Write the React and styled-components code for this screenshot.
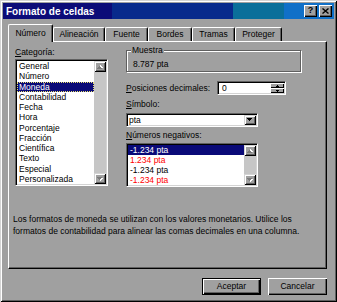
import styled, { createGlobalStyle } from "styled-components";

const COLORS = {
  face: "#a0a0a0",
  light: "#d4d4d4",
  white: "#ffffff",
  shadow: "#606060",
  dark: "#000000",
  navy: "#0a0a78",
  red: "#ff0000",
  track: "#c6c6c6",
  arrowOff: "#7a7a7a",
};

const GlobalStyle = createGlobalStyle`
  html, body {
    margin: 0;
    padding: 0;
    background: ${COLORS.face};
  }
  body {
    font-family: "Liberation Sans", Arial, sans-serif;
    font-size: 8.5px;
    color: #000;
  }
`;

const Window = styled.div`
  width: 337px;
  height: 302px;
  box-sizing: border-box;
  padding: 3px;
  background: ${COLORS.face};
  box-shadow: inset 1px 1px ${COLORS.light}, inset -1px -1px ${COLORS.dark},
    inset 2px 2px ${COLORS.white}, inset -2px -2px ${COLORS.shadow};
  display: flex;
  flex-direction: column;
`;

const TitleBar = styled.div`
  height: 16px;
  display: flex;
  align-items: center;
  justify-content: space-between;
  padding: 0 2px 0 3px;
  background: linear-gradient(
    to right,
    #0c0c78 0%,
    #0c0c78 33%,
    #082a8c 33%,
    #082a8c 69.5%,
    #0a6f9a 69.5%,
    #0a6f9a 85%,
    #1070c8 85%,
    #1070c8 100%
  );
`;

const Title = styled.span`
  color: #fff;
  font-weight: bold;
  font-size: 10px;
`;

const CaptionButtons = styled.div`
  display: flex;
  gap: 2px;
`;

const CaptionButton = styled.div`
  width: 13px;
  height: 12px;
  box-sizing: border-box;
  background: ${COLORS.face};
  box-shadow: inset 1px 1px ${COLORS.white}, inset -1px -1px ${COLORS.dark},
    inset -2px -2px ${COLORS.shadow};
  display: flex;
  align-items: center;
  justify-content: center;
  font-weight: bold;
  font-size: 9px;
  line-height: 1;
  padding-bottom: 1px;
`;

const Body = styled.div`
  display: flex;
  flex-direction: column;
  padding: 5px 7px 0 5px;
`;

const TabRow = styled.div`
  display: flex;
  align-items: flex-end;
  height: 17px;
`;

const Tab = styled.div`
  position: relative;
  z-index: ${(p) => (p.$active ? 1 : 0)};
  width: ${(p) => p.$w}px;
  height: ${(p) => (p.$active ? 18 : 14)}px;
  margin-bottom: ${(p) => (p.$active ? -1 : 0)}px;
  box-sizing: border-box;
  background: ${COLORS.face};
  border-top: 1px solid ${COLORS.white};
  border-left: 1px solid ${COLORS.white};
  border-right: 1px solid ${COLORS.dark};
  border-radius: 2px 2px 0 0;
  box-shadow: inset -1px 0 ${COLORS.shadow};
  display: flex;
  justify-content: center;
  padding-top: ${(p) => (p.$active ? 3 : 1)}px;
  line-height: 11px;
  white-space: nowrap;
`;

const Panel = styled.div`
  height: 228px;
  box-sizing: border-box;
  border: 1px solid;
  border-color: ${COLORS.white} ${COLORS.dark} ${COLORS.dark} ${COLORS.white};
  box-shadow: inset -1px -1px ${COLORS.shadow};
  padding: 5px 0 0 6px;
  display: flex;
  flex-direction: column;
`;

const Columns = styled.div`
  display: flex;
  gap: 18px;
`;

const Column = styled.div`
  display: flex;
  flex-direction: column;
  width: ${(p) => p.$w}px;
`;

const Label = styled.div`
  line-height: 11px;
  height: 11px;
  margin-top: ${(p) => p.$mt || 0}px;
  white-space: nowrap;
  u {
    text-decoration: underline;
    text-underline-offset: 1px;
  }
`;

const Sunken = styled.div`
  box-sizing: border-box;
  width: ${(p) => p.$w}px;
  height: ${(p) => p.$h}px;
  margin-top: ${(p) => p.$mt || 0}px;
  background: ${COLORS.white};
  border: 1px solid;
  border-color: ${COLORS.shadow} ${COLORS.white} ${COLORS.white} ${COLORS.shadow};
  box-shadow: inset 1px 1px ${COLORS.dark}, inset -1px -1px ${COLORS.light};
  padding: 1px;
  display: flex;
`;

const Items = styled.div`
  flex: 1;
  overflow: hidden;
`;

const Item = styled.div`
  box-sizing: border-box;
  height: ${(p) => p.$h}px;
  line-height: ${(p) => p.$h}px;
  padding-left: 2px;
  white-space: nowrap;
  background: ${(p) => (p.$selected ? COLORS.navy : "transparent")};
  color: ${(p) => (p.$selected ? COLORS.white : p.$red ? COLORS.red : "#000")};
  outline: ${(p) => (p.$focus ? `1px dotted #e8e070` : "none")};
  outline-offset: -1px;
`;

const ScrollBar = styled.div`
  width: 12px;
  display: flex;
  flex-direction: column;
  justify-content: space-between;
  background: ${COLORS.track};
`;

const RaisedButton = styled.div`
  box-sizing: border-box;
  width: ${(p) => p.$w}px;
  height: ${(p) => p.$h}px;
  background: ${COLORS.face};
  box-shadow: inset 1px 1px ${COLORS.light}, inset -1px -1px ${COLORS.dark},
    inset 2px 2px ${COLORS.white}, inset -2px -2px ${COLORS.shadow};
  display: flex;
  align-items: center;
  justify-content: center;
  flex-shrink: 0;
  overflow: hidden;
`;

const SpinButton = styled(RaisedButton)`
  box-shadow: inset 1px 1px ${COLORS.white}, inset -1px -1px ${COLORS.dark};
`;

const GroupBox = styled.div`
  box-sizing: border-box;
  width: 175px;
  height: 22px;
  margin-top: 3px;
  border: 1px solid ${COLORS.shadow};
  box-shadow: inset 1px 1px ${COLORS.white}, 1px 1px ${COLORS.white};
`;

const Legend = styled.div`
  width: fit-content;
  margin: -6px 0 0 4px;
  padding: 0 1px;
  line-height: 11px;
  background: ${COLORS.face};
`;

const Sample = styled.div`
  margin: 3px 0 0 6px;
  line-height: 11px;
`;

const FieldRow = styled.div`
  width: 160px;
  height: 14px;
  margin-top: ${(p) => p.$mt || 0}px;
  display: flex;
  align-items: center;
  justify-content: space-between;
`;

const FieldText = styled.div`
  flex: 1;
  line-height: 10px;
  padding-left: ${(p) => p.$pl || 1}px;
  white-space: nowrap;
`;

const SpinStack = styled.div`
  display: flex;
  flex-direction: column;
`;

const Description = styled.div`
  margin: 26px 0 0 -2px;
  line-height: 12px;
  white-space: nowrap;
`;

const ButtonRow = styled.div`
  display: flex;
  justify-content: flex-end;
  gap: 7px;
  margin-top: 9px;
`;

const PushButton = styled.div`
  box-sizing: border-box;
  width: 59px;
  height: 17px;
  background: ${COLORS.face};
  border: ${(p) => (p.$default ? `1px solid ${COLORS.dark}` : "none")};
  box-shadow: inset 1px 1px ${COLORS.white}, inset -1px -1px ${COLORS.dark},
    inset -2px -2px ${COLORS.shadow};
  display: flex;
  align-items: center;
  justify-content: center;
  line-height: 1;
`;

const Arrow = ({ up, off, small }) => {
  const d = small ? "M0 0h3v1h-1v1h-1v-1h-1z" : "M0 0h5v1h-1v1h-1v1h-1v-1h-1v-1h-1z";
  const w = small ? 3 : 6;
  const h = small ? 2 : 4;
  return (
    <svg
      width={w}
      height={h}
      viewBox={`0 0 ${w} ${h}`}
      style={{ transform: up ? "scaleY(-1)" : "none", display: "block" }}
    >
      {off && <path d={d} fill={COLORS.white} transform="translate(1 1)" />}
      <path d={d} fill={off ? COLORS.arrowOff : COLORS.dark} />
    </svg>
  );
};

const DisabledScroll = () => (
  <ScrollBar>
    <RaisedButton $w={12} $h={11}>
      <Arrow up off />
    </RaisedButton>
    <RaisedButton $w={12} $h={11}>
      <Arrow off />
    </RaisedButton>
  </ScrollBar>
);

const tabs = [
  ["Número", 45],
  ["Alineación", 52],
  ["Fuente", 43],
  ["Bordes", 44],
  ["Tramas", 43],
  ["Proteger", 47],
];

const categories = [
  "General",
  "Número",
  "Moneda",
  "Contabilidad",
  "Fecha",
  "Hora",
  "Porcentaje",
  "Fracción",
  "Científica",
  "Texto",
  "Especial",
  "Personalizada",
];

const negatives = [
  { text: "-1.234 pta", selected: true },
  { text: "1.234 pta", red: true },
  { text: "-1.234 pta" },
  { text: "-1.234 pta", red: true },
];

const App = () => {
  return (
    <>
      <GlobalStyle />
      <Window>
        <TitleBar>
          <Title>Formato de celdas</Title>
          <CaptionButtons>
            <CaptionButton>?</CaptionButton>
            <CaptionButton>
              <svg width="7" height="6" viewBox="0 0 7 6">
                <path d="M0.5 0.5l6 5M6.5 0.5l-6 5" stroke="#000" strokeWidth="1.4" />
              </svg>
            </CaptionButton>
          </CaptionButtons>
        </TitleBar>
        <Body>
          <TabRow>
            {tabs.map(([name, w], i) => (
              <Tab key={name} $w={w} $active={i === 0}>
                {name}
              </Tab>
            ))}
          </TabRow>
          <Panel>
            <Columns>
              <Column $w={93}>
                <Label>
                  <u>C</u>ategoría:
                </Label>
                <Sunken $w={93} $h={127} $mt={1}>
                  <Items>
                    {categories.map((c) => (
                      <Item key={c} $h={10.25} $selected={c === "Moneda"} $focus={c === "Moneda"}>
                        {c}
                      </Item>
                    ))}
                  </Items>
                  <DisabledScroll />
                </Sunken>
              </Column>
              <Column $w={190}>
                <GroupBox>
                  <Legend>Muestra</Legend>
                  <Sample>8.787 pta</Sample>
                </GroupBox>
                <FieldRow $mt={9}>
                  <Label>
                    <u>P</u>osiciones decimales:
                  </Label>
                  <Sunken $w={69} $h={14}>
                    <FieldText $pl={3}>0</FieldText>
                    <SpinStack>
                      <SpinButton $w={14} $h={5}>
                        <Arrow up small />
                      </SpinButton>
                      <SpinButton $w={14} $h={5}>
                        <Arrow small />
                      </SpinButton>
                    </SpinStack>
                  </Sunken>
                </FieldRow>
                <Label $mt={4}>
                  <u>S</u>ímbolo:
                </Label>
                <Sunken $w={132} $h={14} $mt={3}>
                  <FieldText $pl={1}>pta</FieldText>
                  <RaisedButton $w={12} $h={10}>
                    <Arrow />
                  </RaisedButton>
                </Sunken>
                <Label $mt={3}>
                  <u>N</u>úmeros negativos:
                </Label>
                <Sunken $w={132} $h={44} $mt={2}>
                  <Items>
                    {negatives.map((n, i) => (
                      <Item key={i} $h={10} $selected={n.selected} $red={n.red}>
                        {n.text}
                      </Item>
                    ))}
                  </Items>
                  <DisabledScroll />
                </Sunken>
              </Column>
            </Columns>
            <Description>
              Los formatos de moneda se utilizan con los valores monetarios. Utilice los
              <br />
              formatos de contabilidad para alinear las comas decimales en una columna.
            </Description>
          </Panel>
          <ButtonRow>
            <PushButton $default>Aceptar</PushButton>
            <PushButton>Cancelar</PushButton>
          </ButtonRow>
        </Body>
      </Window>
    </>
  );
};

export default App;
